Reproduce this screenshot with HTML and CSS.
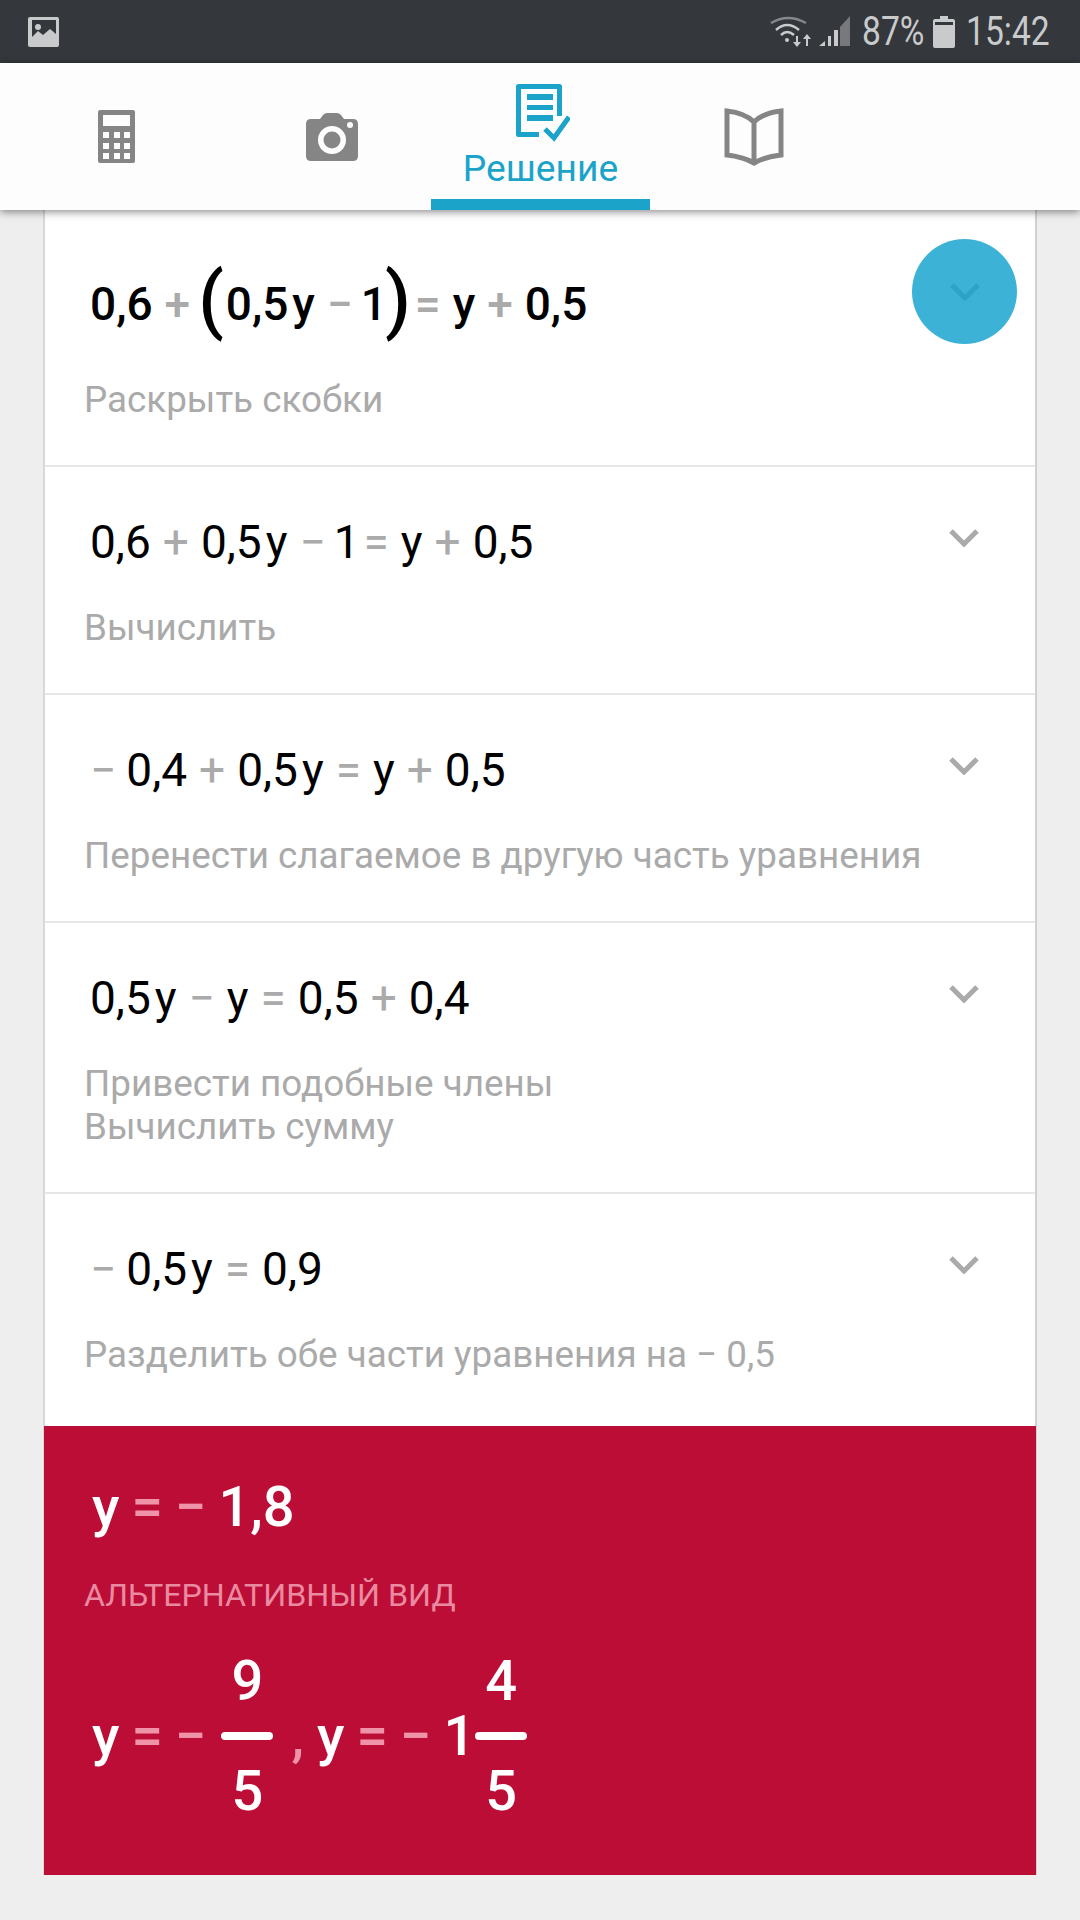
FILE: index.html
```html
<!DOCTYPE html>
<html lang="ru">

<head>
    <meta charset="UTF-8">
    <meta name="viewport" content="width=device-width, initial-scale=1.0">
    <title>Решение</title>
    <link rel="stylesheet" href="styles.css">
</head>

<body>

    <div class="status-bar">
        <svg class="status-photo" width="31" height="30" viewBox="0 0 31 30">
            <path fill="#c8cacc" fill-rule="evenodd" d="M2 0h27a2 2 0 0 1 2 2v26a2 2 0 0 1-2 2H2a2 2 0 0 1-2-2V2a2 2 0 0 1 2-2zM4 3v17l6-6 5 4 7-6 6 5V3z"/>
            <circle cx="10" cy="10" r="3" fill="#c8cacc"/>
        </svg>
        <div class="status-right">
            <svg class="status-wifi" width="44" height="32" viewBox="0 0 44 32">
                <path fill="none" stroke="#85888b" stroke-width="2.5" d="M1 7Q18-3 36 7"/>
                <path fill="none" stroke="#c8cacc" stroke-width="2.5" d="M6 14Q17 4 29 14M11 19Q17 13 24 19"/>
                <circle cx="17" cy="24" r="2" fill="#c8cacc"/>
                <path fill="#c8cacc" d="M26 20h2v6h3l-4 5-4-5h3zM37 18l4 5h-3v7h-2v-7h-3z"/>
            </svg>
            <svg class="status-signal" width="31" height="32" viewBox="0 0 31 32">
                <path fill="#c8cacc" d="M0 30l6-5v5zM9 20h3v10H9zM15 14h4v16h-4z"/>
                <path fill="#77797c" d="M21 11L31 0v30H21z"/>
            </svg>
            <span class="status-text status-pct">87%</span>
            <svg class="status-battery" width="22" height="32" viewBox="0 0 22 32">
                <path fill="#c8cacc" fill-rule="evenodd" d="M7 0h8v3h5a2 2 0 0 1 2 2v25a2 2 0 0 1-2 2H2a2 2 0 0 1-2-2V5a2 2 0 0 1 2-2h5zM2 6v3h18V6z"/>
            </svg>
            <span class="status-text status-time">15:42</span>
        </div>
    </div>

    <div class="tabs">
        <div class="tab">
            <svg width="37" height="53" viewBox="0 0 37 53">
                <path fill="#858585" fill-rule="evenodd" d="M2 0h33a2 2 0 0 1 2 2v49a2 2 0 0 1-2 2H2a2 2 0 0 1-2-2V2a2 2 0 0 1 2-2zM5 5v11h27V5zM5 22v6h6v-6zM16 22v6h6v-6zM26 22v6h6v-6zM5 33v6h6v-6zM16 33v6h6v-6zM26 33v6h6v-6zM5 43v6h6v-6zM16 43v6h6v-6zM26 43v6h6v-6z"/>
            </svg>
        </div>
        <div class="tab tab-camera">
            <svg width="52" height="48" viewBox="0 0 52 48">
                <path fill="#858585" fill-rule="evenodd" d="M5 6h9l3-4q2-2 4-2h10q2 0 4 2l3 4h9q5 0 5 5v32q0 5-5 5H5q-5 0-5-5V11q0-5 5-5zM26 13a14 14 0 1 0 0 28 14 14 0 0 0 0-28zM44 9a3 3 0 1 0 0 6 3 3 0 0 0 0-6z"/>
                <circle cx="26" cy="27" r="8.5" fill="#858585"/>
            </svg>
        </div>
        <div class="tab tab-active">
            <svg width="54" height="58" viewBox="0 0 54 58">
                <path fill="none" stroke="#1ba3ca" stroke-width="5" stroke-linejoin="round" d="M43.5 32V2.5H2.5v48H23"/>
                <path fill="#1ba3ca" d="M11 10h26v6H11zM11 21h26v5H11zM11 31h26v6H11z"/>
                <path fill="none" stroke="#1ba3ca" stroke-width="5" d="M29 45l9 9 15-21"/>
            </svg>
            <span class="tab-label">Решение</span>
        </div>
        <div class="tab tab-book">
            <svg width="60" height="58" viewBox="0 0 60 58">
                <path fill="none" stroke="#858585" stroke-width="5" stroke-linejoin="miter" d="M30 14C23 7 12 4 3 3v44c10 1 20 4 27 8 7-4 17-7 27-8V3c-9 1-20 4-27 11zM30 14v41"/>
            </svg>
        </div>
    </div>

    <div class="steps">

        <div class="step step-first">
            <div class="math math-bold">
                <span>0,6</span><span class="op">+</span><span class="paren paren-open">(</span><span>0,5</span><span class="var">y</span><span class="op op-before-one">−</span><span>1</span><span class="paren paren-close">)</span><span class="op op-tight">=</span><span>y</span><span class="op">+</span><span>0,5</span>
            </div>
            <div class="desc">Раскрыть скобки</div>
            <div class="chevron-circle">
                <svg width="30" height="18" viewBox="0 0 30 18"><path fill="none" stroke="#2da3c6" stroke-width="5" d="M2 2l13 13L28 2"/></svg>
            </div>
        </div>

        <div class="step">
            <div class="math">
                <span>0,6</span><span class="op">+</span><span>0,5</span><span class="var">y</span><span class="op op-before-one">−</span><span>1</span><span class="op op-tight">=</span><span>y</span><span class="op">+</span><span>0,5</span>
            </div>
            <div class="desc">Вычислить</div>
            <svg class="chevron" width="30" height="18" viewBox="0 0 30 18"><path fill="none" stroke="#aaa" stroke-width="5" d="M2 2l13 13L28 2"/></svg>
        </div>

        <div class="step">
            <div class="math">
                <span class="op op-lead">−</span><span>0,4</span><span class="op">+</span><span>0,5</span><span class="var">y</span><span class="op">=</span><span>y</span><span class="op">+</span><span>0,5</span>
            </div>
            <div class="desc">Перенести слагаемое в другую часть уравнения</div>
            <svg class="chevron" width="30" height="18" viewBox="0 0 30 18"><path fill="none" stroke="#aaa" stroke-width="5" d="M2 2l13 13L28 2"/></svg>
        </div>

        <div class="step">
            <div class="math">
                <span>0,5</span><span class="var">y</span><span class="op">−</span><span>y</span><span class="op">=</span><span>0,5</span><span class="op">+</span><span>0,4</span>
            </div>
            <div class="desc">Привести подобные члены<br>Вычислить сумму</div>
            <svg class="chevron" width="30" height="18" viewBox="0 0 30 18"><path fill="none" stroke="#aaa" stroke-width="5" d="M2 2l13 13L28 2"/></svg>
        </div>

        <div class="step step-last">
            <div class="math">
                <span class="op op-lead">−</span><span>0,5</span><span class="var">y</span><span class="op">=</span><span>0,9</span>
            </div>
            <div class="desc">Разделить обе части уравнения на − 0,5</div>
            <svg class="chevron" width="30" height="18" viewBox="0 0 30 18"><path fill="none" stroke="#aaa" stroke-width="5" d="M2 2l13 13L28 2"/></svg>
        </div>

        <div class="answer">
            <div class="math math-answer">
                <span>y</span><span class="op">=</span><span class="op op-lead">−</span><span>1,8</span>
            </div>
            <div class="answer-label">АЛЬТЕРНАТИВНЫЙ ВИД</div>
            <div class="math math-answer math-fractions">
                <span>y</span><span class="op">=</span><span class="op op-lead">−</span>
                <span class="fraction"><span>9</span><span class="fraction-bar"></span><span>5</span></span>
                <span class="comma">,</span>
                <span>y</span><span class="op">=</span><span class="op op-lead">−</span><span>1</span>
                <span class="fraction fraction-mixed"><span>4</span><span class="fraction-bar"></span><span>5</span></span>
            </div>
        </div>

    </div>

</body>

</html>
```

FILE: styles.css
```css
* {
    box-sizing: border-box;
}

body {
    margin: 0;
    width: 1080px;
    height: 1920px;
    overflow: hidden;
    background-color: #eeeeee;
    font-family: Roboto, "Noto Sans", sans-serif;
}

.status-bar {
    height: 63px;
    background-color: #34373b;
    display: flex;
    align-items: center;
    justify-content: space-between;
    padding: 0 30px 0 28px;
}

.status-right {
    display: flex;
    align-items: center;
}

.status-signal {
    margin-left: 5px;
}

.status-battery {
    margin-left: 9px;
}

.status-text {
    display: inline-block;
    color: #c8cacc;
    font-size: 40px;
    line-height: 63px;
    white-space: nowrap;
    transform: scaleX(0.84);
    transform-origin: left center;
}

.status-pct {
    width: 62px;
    margin-left: 12px;
}

.status-time {
    width: 84px;
    margin-left: 11px;
}

.tabs {
    position: relative;
    z-index: 2;
    height: 147px;
    background-color: #fdfdfd;
    display: grid;
    grid-template-columns: 212px 209px 219px 212px;
    padding-left: 10px;
    box-shadow: 0px 2px 8px rgba(0, 0, 0, 0.45);
}

.tab {
    display: flex;
    flex-direction: column;
    align-items: center;
    justify-content: center;
}

.tab-camera {
    padding-left: 10px;
}

.tab-book {
    padding-right: 4px;
}

.tab-active {
    justify-content: flex-start;
    padding-top: 21px;
    padding-left: 4px;
    border-bottom: 11px solid #1ba3ca;
}

.tab-label {
    color: #1ba3ca;
    font-size: 37.2px;
    line-height: 44px;
    margin: 4px 0 0 -4px;
}

.steps {
    width: 994px;
    margin: 0 auto 0 43px;
    background-color: #ffffff;
    border-left: 2px solid #d8d8d8;
    border-right: 2px solid #d0d0d0;
}

.step {
    position: relative;
    height: 228px;
    padding: 43px 0 0 45px;
    border-bottom: 2px solid #e6e6e6;
}

.step-first {
    height: 257px;
    padding-top: 62px;
}

.step:nth-child(4) {
    height: 271px;
}

.step-last {
    height: 232px;
    border-bottom: none;
}

.math {
    display: flex;
    align-items: center;
    height: 64px;
    color: #000000;
    font-size: 46px;
    white-space: nowrap;
}

.math-bold {
    font-weight: 500;
}

.op {
    color: #aaaaaa;
    margin: 0 12px;
}

.op-before-one {
    margin-right: 8px;
}

.op-tight {
    margin: 0 12px 0 4px;
}

.op-lead {
    margin: 0 10px 0 0;
}

.var {
    margin-left: 4px;
}

.paren {
    font-size: 74px;
    line-height: 64px;
}

.paren-open {
    margin: -8px 2px 0 -4px;
}

.paren-close {
    margin: -8px 0 0 -2px;
}

.desc {
    margin: 32px 0 0 -6px;
    color: #aaaaaa;
    font-size: 36.8px;
    line-height: 43px;
    white-space: nowrap;
}

.step-first .desc {
    margin-top: 42px;
}

.chevron {
    position: absolute;
    top: 62px;
    right: 56px;
}

.chevron-circle {
    position: absolute;
    top: 29px;
    right: 18px;
    width: 105px;
    height: 105px;
    border-radius: 50%;
    background-color: #3cb2d7;
    display: flex;
    align-items: center;
    justify-content: center;
}

.answer {
    height: 449px;
    background-color: #bb0d35;
    margin: 0 -1px 0 -1px;
    padding: 41px 0 0 48px;
}

.math-answer {
    color: #ffffff;
    font-size: 56px;
    font-weight: 500;
    height: 80px;
}

.math-answer .op {
    color: #ee93a8;
}

.math-answer .op-lead {
    margin-right: 12px;
}

.answer-label {
    margin: 28px 0 0 -8px;
    color: #e98aa1;
    font-size: 32.2px;
    line-height: 40px;
}

.math-fractions {
    height: 240px;
    margin-top: 1px;
}

.fraction {
    display: flex;
    flex-direction: column;
    align-items: center;
    width: 52px;
    margin-left: 3px;
    line-height: 100px;
}

.fraction-bar {
    width: 52px;
    height: 8px;
    border-radius: 4px;
    background-color: #ffffff;
    margin: 1px 0;
}

.comma {
    margin: 0 13px 0 18px;
    color: #ee93a8;
}

.fraction-mixed {
    margin-left: 0;
}
```
